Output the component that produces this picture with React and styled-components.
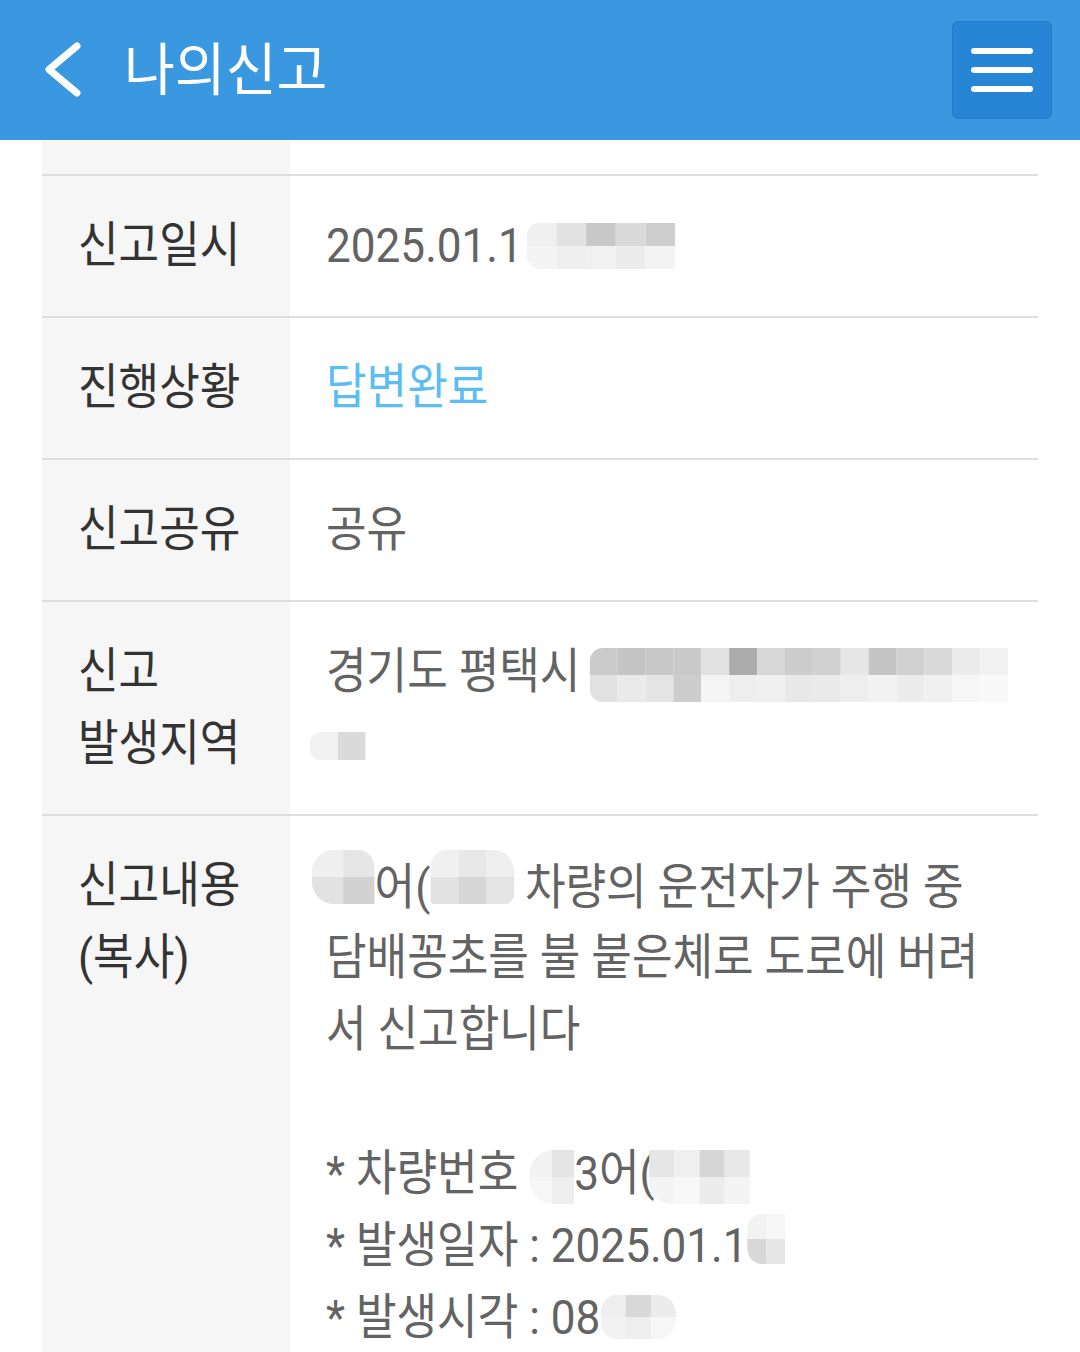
import React from "react";
import styled, { createGlobalStyle } from "styled-components";

const GlobalStyle = createGlobalStyle`
  html, body {
    margin: 0;
    padding: 0;
    background: #ffffff;
  }
  body {
    font-family: Roboto, "Noto Sans CJK KR", "Noto Sans", sans-serif;
    -webkit-font-smoothing: antialiased;
  }
`;

const Header = styled.header`
  display: flex;
  align-items: center;
  height: 140px;
  padding: 0 28px 0 42px;
  background: #3a98e0;
  box-sizing: border-box;
`;

const BackButton = styled.button`
  display: flex;
  align-items: center;
  justify-content: center;
  width: 40px;
  height: 60px;
  padding: 0;
  border: 0;
  background: transparent;
`;

const Title = styled.h1`
  margin: 0 0 0 42px;
  font-size: 57px;
  font-weight: 400;
  line-height: 1;
  color: #ffffff;
`;

const MenuButton = styled.button`
  margin-left: auto;
  display: flex;
  flex-direction: column;
  align-items: center;
  justify-content: center;
  gap: 13px;
  width: 100px;
  height: 98px;
  padding: 0;
  background: #2785d5;
  border: 1px solid #217bc8;
  border-radius: 6px;
  box-sizing: border-box;
`;

const MenuBar = styled.span`
  display: block;
  width: 62px;
  height: 6px;
  border-radius: 3px;
  background: #ffffff;
`;

const Table = styled.div`
  margin: 0 42px;
`;

const Row = styled.div`
  display: grid;
  grid-template-columns: 248px 1fr;
  border-bottom: 2px solid #dedede;
`;

const Label = styled.div`
  padding: ${({ $empty }) => ($empty ? "0" : "34px 0 34px 36px")};
  min-height: ${({ $empty }) => ($empty ? "34px" : "0")};
  background: #f6f6f6;
  font-size: 49px;
  line-height: 72px;
  color: #333333;
`;

const Value = styled.div`
  padding: 34px 0 34px 36px;
  font-size: 49px;
  line-height: 72px;
  color: ${({ $accent }) => ($accent ? "#5cbdf4" : "#636363")};
`;

const Squeeze = styled.span`
  display: ${({ $block }) => ($block ? "block" : "inline-block")};
  white-space: nowrap;
  transform: scaleX(${({ $k }) => $k || 0.9});
  transform-origin: left center;
`;

const Line = styled.div`
  height: 72px;
  white-space: nowrap;
`;

const Mosaic = styled.span`
  display: inline-block;
  overflow: hidden;
  vertical-align: ${({ $shift }) => $shift || 0}px;
  margin-left: ${({ $ml }) => $ml || 0}px;
  border-radius: ${({ $round }) => $round || "14px 0 0 14px"};
`;

const MosaicGrid = styled.span`
  display: grid;
  grid-template-columns: repeat(${({ $cols }) => $cols}, ${({ $w }) => $w}px);
  grid-auto-rows: ${({ $h }) => $h}px;
`;

const Tile = styled.span`
  display: block;
  background: ${({ $c }) => $c};
`;

function Blur({ rows, w = 33, h = 24, shift = 0, ml, round }) {
  return (
    <Mosaic $shift={shift} $ml={ml} $round={round}>
      <MosaicGrid $cols={rows[0].length} $w={w} $h={h}>
        {rows.flat().map((c, i) => (
          <Tile key={i} $c={c} />
        ))}
      </MosaicGrid>
    </Mosaic>
  );
}

const dateBlur = [
  ["#f0f0f0", "#e2e2e2", "#c8c8c8", "#d9d9d9", "#cecece"],
  ["#f4f4f4", "#efefef", "#f1f1f1", "#ececec", "#f3f3f3"],
];

const addrBlur = [
  ["#cbcbcb", "#c4c4c4", "#c7c7c7", "#c9c9c9", "#e1e1e1", "#acacac", "#d7d7d7", "#cdcdcd", "#d1d1d1", "#e6e6e6", "#c5c5c5", "#d1d1d1", "#dadada", "#ececec", "#f2f2f2"],
  ["#e1e1e1", "#eaeaea", "#e4e4e4", "#cdcdcd", "#f5f5f5", "#eeeeee", "#f0f0f0", "#e8e8e8", "#eaeaea", "#eeeeee", "#f2f2f2", "#ececec", "#f0f0f0", "#f6f6f6", "#f9f9f9"],
];

export default function App() {
  return (
    <>
      <GlobalStyle />
      <Header>
        <BackButton aria-label="뒤로">
          <svg width="40" height="60" viewBox="0 0 40 60" fill="none">
            <path
              d="M35 6 L7 29.5 L35 53"
              stroke="#ffffff"
              strokeWidth="7"
              strokeLinecap="round"
              strokeLinejoin="round"
            />
          </svg>
        </BackButton>
        <Title>
          <Squeeze $k={0.97}>나의신고</Squeeze>
        </Title>
        <MenuButton aria-label="메뉴">
          <MenuBar />
          <MenuBar />
          <MenuBar />
        </MenuButton>
      </Header>

      <Table>
        <Row>
          <Label $empty />
          <div />
        </Row>

        <Row>
          <Label>
            <Squeeze>신고일시</Squeeze>
          </Label>
          <Value>
            <Squeeze>
              2025.01.1
              <Blur rows={dateBlur} w={33} h={23} shift={-7} ml={4} />
            </Squeeze>
          </Value>
        </Row>

        <Row>
          <Label>
            <Squeeze>진행상황</Squeeze>
          </Label>
          <Value $accent>
            <Squeeze>답변완료</Squeeze>
          </Value>
        </Row>

        <Row>
          <Label>
            <Squeeze>신고공유</Squeeze>
          </Label>
          <Value>
            <Squeeze>공유</Squeeze>
          </Value>
        </Row>

        <Row>
          <Label>
            <Squeeze $block>
              <Line>신고</Line>
              <Line>발생지역</Line>
            </Squeeze>
          </Label>
          <Value>
            <Squeeze $block>
              <Line>
                경기도 평택시
                <Blur rows={addrBlur} w={31} h={27} shift={-14} ml={10} />
              </Line>
              <Line>
                <Blur
                  rows={[["#f1f1f1", "#dadada"]]}
                  w={31}
                  h={28}
                  shift={0}
                  ml={-18}
                  round="12px 0 0 12px"
                />
              </Line>
            </Squeeze>
          </Value>
        </Row>

        <Row>
          <Label>
            <Squeeze $block>
              <Line>신고내용</Line>
              <Line>(복사)</Line>
            </Squeeze>
          </Label>
          <Value>
            <Squeeze $block>
              <Line>
                <Blur
                  rows={[
                    ["#efefef", "#e6e6e6"],
                    ["#e2e2e2", "#d2d2d2"],
                  ]}
                  w={35}
                  h={27}
                  shift={0}
                  ml={-16}
                  round="24px 18px 0 24px"
                />
                어(
                <Blur
                  rows={[
                    ["#f0f0f0", "#e8e8e8", "#eeeeee"],
                    ["#e2e2e2", "#d6d6d6", "#e4e4e4"],
                  ]}
                  w={31}
                  h={27}
                  shift={0}
                  round="18px 22px 10px 4px"
                />{" "}
                차량의 운전자가 주행 중
              </Line>
              <Line>담배꽁초를 불 붙은체로 도로에 버려</Line>
              <Line>서 신고합니다</Line>
              <Line />
              <Line>
                * 차량번호{" "}
                <Blur
                  rows={[
                    ["#f2f2f2", "#e4e4e4"],
                    ["#f6f6f6", "#eeeeee"],
                  ]}
                  w={25}
                  h={27}
                  shift={-14}
                  round="26px 0 0 26px"
                />
                3어(
                <Blur
                  rows={[
                    ["#e6e6e6", "#f0f0f0", "#d6d6d6", "#e8e8e8"],
                    ["#f4f4f4", "#f8f8f8", "#ececec", "#f4f4f4"],
                  ]}
                  w={28}
                  h={27}
                  shift={-14}
                  ml={-6}
                  round="0 0 0 24px"
                />
              </Line>
              <Line>
                * 발생일자 : 2025.01.1
                <Blur
                  rows={[
                    ["#f2f2f2", "#f6f6f6"],
                    ["#d8d8d8", "#e6e6e6"],
                  ]}
                  w={21}
                  h={25}
                  shift={-2}
                  round="16px 0 0 16px"
                />
              </Line>
              <Line>
                * 발생시각 : 08
                <Blur
                  rows={[
                    ["#eeeeee", "#d8d8d8", "#ececec"],
                    ["#f2f2f2", "#eeeeee", "#f6f6f6"],
                  ]}
                  w={28}
                  h={22}
                  shift={-5}
                  round="18px 20px 20px 18px"
                />
              </Line>
            </Squeeze>
          </Value>
        </Row>
      </Table>
    </>
  );
}
